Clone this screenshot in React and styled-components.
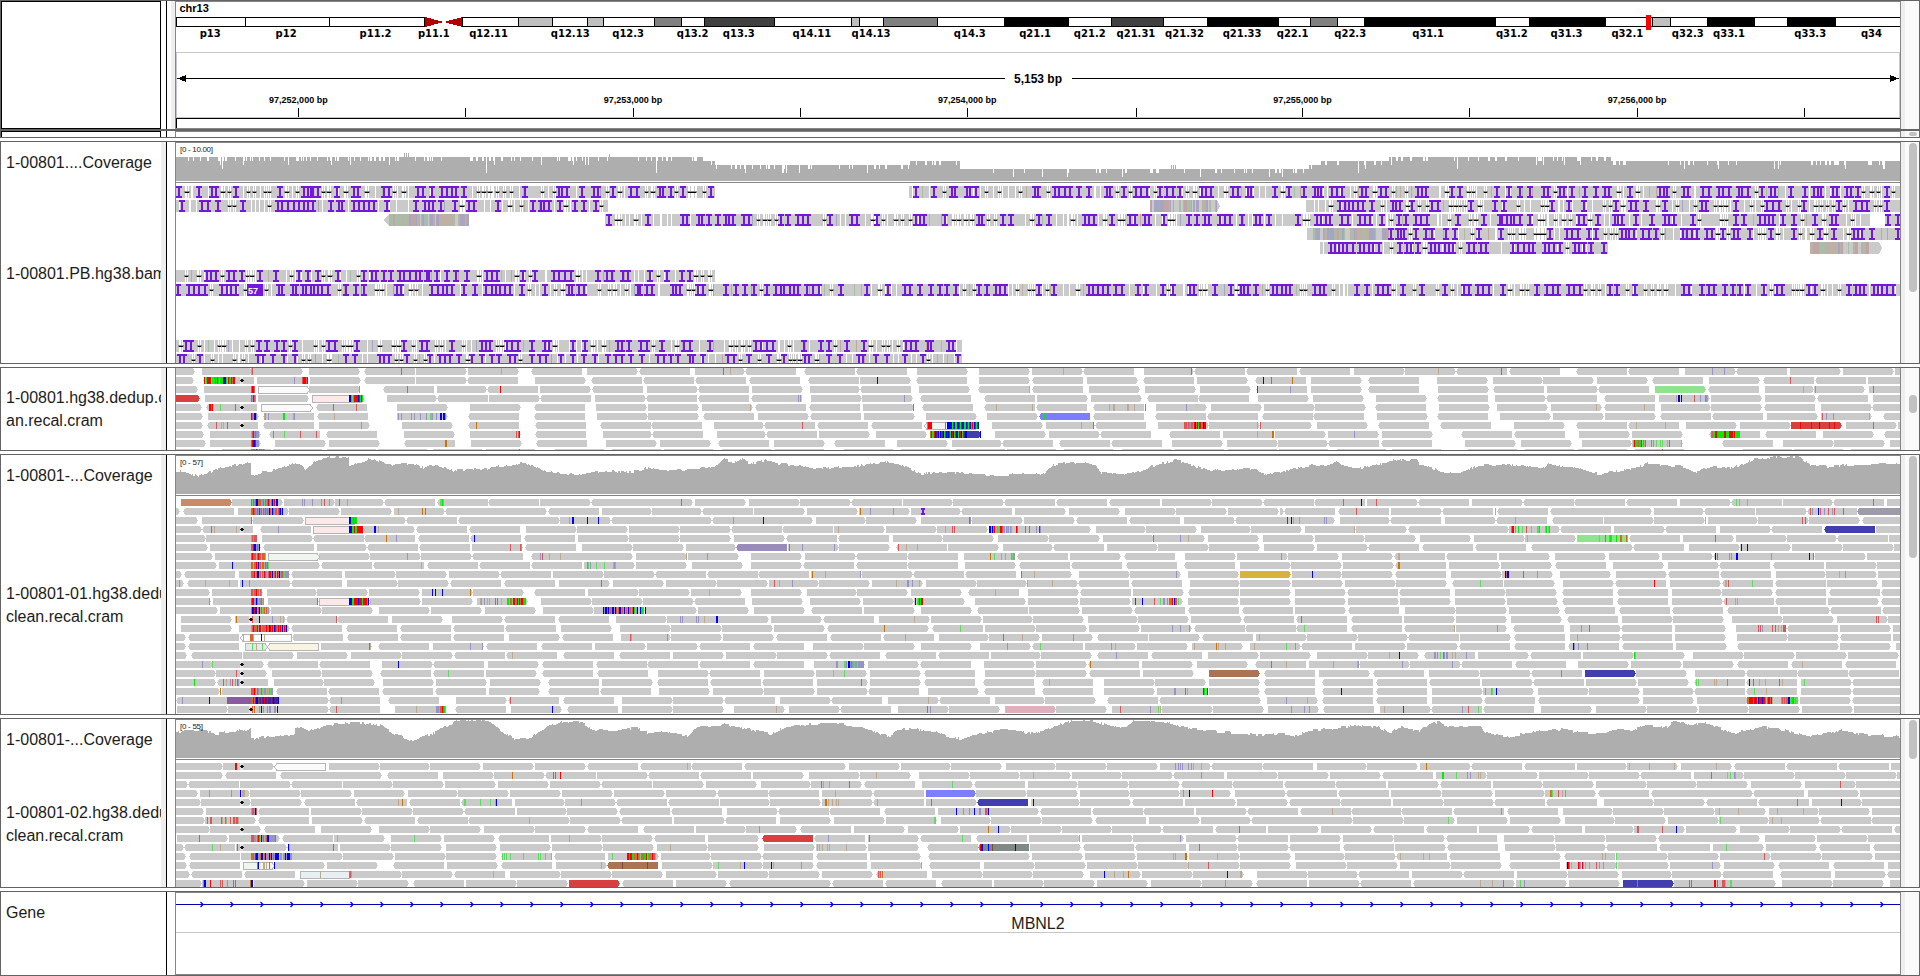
import React from "react";
import styled, { createGlobalStyle } from "styled-components";

const GlobalStyle = createGlobalStyle`
  *, *::before, *::after { box-sizing: border-box; }
  body { margin: 0; background: #fff; font-family: "Liberation Sans", Arial, sans-serif; overflow: hidden; }
`;

/* ---------- frame ---------- */

const Page = styled.main`
  width: 1920px;
  height: 976px;
  display: flex;
  flex-direction: column;
  background: #fff;
`;

const Panel = styled.section`
  display: grid;
  grid-template-columns: 160px 5px 1px 8px 1726px 18px;
  height: ${(p) => p.$height}px;
  margin-bottom: ${(p) => p.$gap || 0}px;
  border: 1px solid #646464;
  flex: none;
  min-height: 0;
`;

const Names = styled.div`
  display: flex;
  flex-direction: column;
  min-width: 0;
  min-height: 0;
  overflow: hidden;
  background: #fff;
  border: ${(p) => (p.$boxed ? "1px solid #000" : "0")};
  ${(p) => p.$open && "border-bottom: 0;"}
`;

const TrackName = styled.div`
  flex: ${(p) => (p.$height ? `0 0 ${p.$height}px` : "1 1 0")};
  display: flex;
  align-items: center;
  padding-left: 5px;
  font-size: 16px;
  line-height: 23px;
  color: #1c1c1c;
  white-space: pre;
`;

const Gutter = styled.div`
  background: ${(p) => (p.$shade ? "#eeeeee" : "#fff")};
`;

const Edge = styled.div`
  background: ${(p) => (p.$header ? "linear-gradient(90deg, #fff 4px, #eee 4px)" : "#fff")};
`;

const Divider = styled.div`
  background: #000;
`;

const DataArea = styled.div`
  border: 1px solid #858585;
  border-top-width: ${(p) => (p.$flush ? 0 : 1)}px;
  border-bottom-width: ${(p) => (p.$closed ? 1 : 0)}px;
  overflow: hidden;
  min-height: 0;
`;

const Chart = styled.svg`
  display: block;
  shape-rendering: crispEdges;
`;

const ScrollTrack = styled.div`
  min-height: 0;
  overflow: hidden;
  background: #fafafa;
  border-left: 4px solid #eee;
  padding: ${(p) => p.$top}px 2px 0 3px;
`;

const Thumb = styled.div`
  width: 8px;
  margin-left: 1px;
  height: ${(p) => p.$height}px;
  border-radius: 4px;
  background: #c1c1c1;
`;

/* ---------- scale: 2.45 units per pixel, three 1568-unit tiles ---------- */

const LEFT = 176;
const WIDTH = 1724;
const px = (tile, u) => tile * 640 + u / 2.45;
const rpx = (tile, u) => Math.round(px(tile, u));

const seeded = (seed) => {
  let s = seed;
  return () => {
    s = (s * 1664525 + 1013904223) % 4294967296;
    return s / 4294967296;
  };
};

const BASE = {
  r: "#ff0000", R: "#dd5555", b: "#0000f5", p: "#9494c8", g: "#00ee00",
  G: "#5edc5e", o: "#d17105", t: "#bfa890", L: "#50208f", H: "#7c4a3a",
};

const FILL = {
  A: "#ca8a68", B: "#7d7dff", C: "#413eb0", D: "#d84040", E: "#8fe38f", F: "#9b8bbb",
  G: "#d6b23f", H: "#ab7253", I: "#e1aebc", J: "#9f9aaa", K: "#808a84", L: "#885c9e",
};

const OUTLINED = {
  W: "#fafafa", P: "#fce8e8", Y: "#f9f3e2", N: "#f0f5f0", O: "#e8eff2", Q: "#e8e8e8",
};

/* Reads: "-" marks a reverse strand read, a letter its colour.
   Bases: position, then one letter for each pixel. */

const CRAM_A = [
  { reads: ["354 495 618 757 -892 1020 1146 -1301 1438 -1565", "135 -258 -402 -530 679 831 960 -1085 1235 -1358 -1485", "-46 181 306 -432 -562 -724 -853 992 -1118 1250 1379 1506"],
    marks: ["616:GR 983:o 1228:t", "204:R 221:t 1037:t 1350:o", "386:t 542:R 1059:p 1088:p"] },
  { reads: ["350 -498 630 759 -892 1018 -1144 1311 -1448", "-7 -135 -267 -412 538 -676 831 -960 1095 -1232 1365 -1507", "76 -215 385 522 645 777 -911 1051 -1184 -1310 1441"],
    marks: ["500:rGgrrrrGgpgRgrgGgRgbbbgGrRgrRrr 590:k 721:p 741:RrrrRr", "581:b 1527:b 1546:R", "30:o 1250:R"] },
  { reads: ["359 500 632W 758 -938 1071 -1193 1323 -1451", "17 -141 274 416 -538 684 -828 -960 1100 1237 1372 -1510", "76 -215 387 -522 654 -780 919E -1048 1188 1309 1443"],
    marks: ["616:RrrR 880:p 997:o 1225:r", "953:t 1512:r", "24:p 1282:t 1311:p 1453:o"] },
  { reads: ["365D 502 632 765P 948 -1071 1198 -1323 1458", "-15 -141 -271 419 543 -686 -842 973 1105 -1242 -1368 1514", "80 235 -384 527 -652 -793 929 1056 1188 -1315 1453"],
    marks: ["616:RprRp 855:bbgGgrrrrbrgbg", "387:p.p 647:p", "970:t.bb.b 1015:R 1030:p 1042:gpG"] },
  { reads: ["370 -505 640W -775 973 1151 -1309 1461", "20 152 -282 -414 546 -690 -842 -970 -1110 1265 1398 1528", "86 -233 390 532 664 -793 933 1055 -1187 1325 -1450"],
    marks: ["512:rrRr 539:G 576:R 590:k 816:R 873:R", "269:t 669:R 873:t 961:t 1149:t 1160:tt 1194:tt 1211:t 1237:o 1338:p", "773:t 892:t"] },
  { reads: ["372 510 -645 -777 973 -1147 -1309 1463", "20 -155 289 -417 549 701 850 -977B -1110 -1262 -1390 -1523", "-81 238 -385 539 669 796 -930 -1058 1193 1325 -1477"],
    marks: ["616:rRpbbp 648:tp..p 693:gg 718:Gp 819:t 975:p..p 1007:p 1015:p 1030:p 1043:p 1053:GGp 1068:p 1079:bb.bbp", "990:g", "1327:R 1338:p 1355:p 1442:t"] },
  { reads: ["372 -507 -645 782 985 -1147 -1311 -1470", "-27 181 -305 -433 -565 -697N 862 995 -1115 1269 1395 1522", "91 -240 -393 573 -724 -852 995 1127 1252D 1387 1514"],
    marks: ["530:R 541:t.t 557:R 590:k 885:p 1167:o", "397:R 1081:t 1110:R 703:grrrr 747:R.bbbbbgrbggbbrgrbbggbrgrbgrgbrgrb 1333:RRRpRgpRRprbRrgrrgRbrr 1512:G 1519:R", "873:t 944:t 1274:r 1301:r 1321:L 1344:r 1357:r 1453:o"] },
  { reads: ["374 514 -659 -798 990 1151 -1311 1478", "-30 189 -309 439 578 710C 870 1002 -1127 -1297 1428 1556", "118 250 -444 -573 733 862 -1051 -1189 1330 -1480"],
    marks: ["616:GRrpRppp 669:g 696:G 735:R 775:R 1264:R.Rr", "710:orggrbLrbgbrLbgrbLbrgbrbgrbbgLrbgrLbb 833:b 1512:t 1549:oR", "181:p 1055:gRggrrRggggggrrgggrrrrgrggggg"] },
  { reads: ["380 514 673 806 -989 1154 -1314 1485", "49 -190 328 -475 630 764 -888 -1026 -1155 1303 1438 1563", "-117 -248 453 590 740 863 -1082 1232 1357 1494"],
    marks: ["616:Rrbbrppp 1090:oo", "", "865:GrgggRggrGgtR 909:g.p..G 930:G.G 947:G 953:R 983:t"] },
  { reads: ["370 545 670 800 925 1060 1190 1360 1500", "60 200 330 500 640 775 900 1040 1180 1310 1440 1565", "140 275 460 600 730 870 1135 1260 1400"],
    marks: ["616:RgoRGrRGogRGoG 1272:R", "", "936:o"] },
];

const CRAM_01 = [
  { reads: ["443A 569 695 820 -942 -1070 -1196 1323 -1448", "5 135 267 393 -516 644 768 -892 -1020 -1148 1279 1401 -1526", "-84 212 -338 470 -595 -721 -848 980 -1104 1232 -1356 1487"],
    marks: ["616:RGRpRbboRRppoGRpRrRtRbRrpbb 741:p.p 765:p 787:p..R 806:p 831:R 849:G 1078:GGgG", "101:o", "155:o 199:b 236:R 1116:G..G 1145:G 1453:o"] },
  { reads: ["315 -448 583 709 835 966 -1091 1216 -1342 1475", "30 -153 279 409 537 664 -787 919 1051 1188 1313 1441 1567", "-10 -143 272 -398 -532 -661 787 916 -1040 1165 -1290 -1413J"],
    marks: ["616:oorRgpRprpRtRpRpRpbRpbRpRRpRrbpb 974:t 1034:o..R", "539:o 564:p 620:p", "187:R 527:t 1299:R.p 1319:b.R 1333:p 1343:R 1353:p.R 1380:R"] },
  { reads: ["360 495 620 747P 873 -994 -1121 1246 1371 -1496", "52 -177 300 431 553 688 813 941 -1068 -1197 1333 -1458", "10 147 -270 405 -530 -666 793 917 1048 1172 1297 -1425"],
    marks: ["616:R 855:bbggRgRg 1394:G..bb 1437:b 1464:b", "228:p 302:b 807:Rp", "17:r 26:b.G 47:G 109:p.p 576:G 1042:t 1280:R..R"] },
  { reads: ["370 -496 -636 767P 893 -1020 -1148 1289 1414 1540", "98 -222 -347 475 603 727 854 981 1117 1240 1374 1497", "61 187 -313 438 562 -687 818 -943 1078 -1203 -1332C 1459"],
    marks: ["517:R..t 577:t 590:k 680:p 855:bbbggrggrrrrrr 917:bb 926:t", "485:t 748:t 764:R.R 856:bbGbRrGtpGprrRpp.pGp.pG 921:rR 944:R 953:R 969:p 978:rp", "182:t 566:grr.p 582:g 594:G 603:R 616:G 630:GGg 649:Gg.Gg"] },
  { reads: ["380 505 642 -766 -893 -1024 -1151 -1285 1416 1541", "98 230 -357 -486 620 743 877 1002 1134 1260 1392 1526", "85 208 343 475 600 728E -854 987 1117 1241 -1364 1492"],
    marks: ["616:GRpRRR 946:o 970:p 1161:b", "1257:o 1323:p 1343:t", "605:t 782:G 797:o 807:pgp 822:g 832:oo 848:oG 1066:R"] },
  { reads: ["385 514 -645 777 -900 -1027 1156 -1287 1427 1552", "112 -235F 362 487 -628 755 889 -1013 1144 1268 1394 1529", "91 -215 -349 -478 -614 741 -865 1002 1127 1254 1379 1504"],
    marks: ["616:RRrbbpRpb 1249:R 1273:Rp", "365:o 397:p 476:p 632:R 652:t 679:t", "1130:b 1144:b"] },
  { reads: ["396 527 657N 782 907 1031 -1156 -1301 1427 1558", "118 272 404 -529 -654 794 -923 1053 -1185 1335 1463", "19 153 -280 -407 537 674 806 936 -1061 1187 1310 1438"],
    marks: ["616:RrRRRtRrRRtRRot 998:p 1323:p.R 1346:t 1371:t", "113:t 165:p 858:o 867:G 885:G 895:G 910:pGpp", "2:p 289:tt 1066:b.R 1099:p.p 1117:bb 1204:p 1297:b 1307:o"] },
  { reads: ["406 537 660 -786 -914 -1045 -1173 -1302 1430 1558", "127 272 -399 -528 -654 796 -929 -1055 -1190 -1332 1470", "26 154 -281 415 541 -673 816 951 -1076 -1208 1338 1462"],
    marks: ["569:b 616:RotRRrRbpRtoRtRpRG 1031:t 1437:gG 1446:p 1461:G 1480:G 1503:GpG", "", "289:oo"] },
  { reads: ["320 -450 586 -713 845 970 1100 -1225 1356 1480", "-37 -164 -290 420 543 -669 -796 933 1076 1201 1343 1470G", "29 153 -281 419 543 686 822 -950 -1078 1216 1338 1466"],
    marks: ["616:RRRrGRbbpRtRprRpGRrrRbpRrtrRbpoRpGpppp", "421:o 453:t 539:p 934:R 966:t 1312:p", "79:b 551:bRbb 596:R 630:p 1370:t 1384:p"] },
  { reads: ["326 -458 587 -714 850 974 -1102 -1234 1370 1502", "64 189 316 439 568 701 825 949 -1073 -1202 1347 1470", "29 159 283 -421 548 693 -820 955 -1082 -1212 1340 1475"],
    marks: ["439:p 503:t 562:t 593:b 610:p 1473:o", "328:R 341:t 373:p 628:t 653:pp 667:p 684:t 948:G 1010:t", "490:G 916:r 1090:tt.R 1156:G"] },
  { reads: ["390 520 653 777 904 1035 1159 -1309 1441 1566", "124 272 408 531 665 -804 950 -1079 1208 -1342 1471", "37 -164 -291 428 553 -691 -826 960 1084 -1212 -1344 -1472"],
    marks: ["616:RRpRRrpRtRp 1058:b..b 1083:b 1152:o", "169:t 870:t", ""] },
  { reads: ["392 522 657 782P 907 1035 1168 1325 1450", "7 -133 274 416 546 671 821 951 1079 1205 1342 1471", "37 167 295 428 556 -691 -825 960 -1086 -1212 1342 -1473"],
    marks: ["513:p 616:RrrppbRtppRtp 777:R 855:bbbggrrrrbrrrgrrrrRb 1175:tp 1185:p 1193:t.t 1213:o.o 1228:t 1241:ggGRoGrrgRrgrRrrRgg", "674:b.Ggrgrr 1213:r 1230:b 1259:R 1273:G 1282:pp 1291:p.RoRr.bRR.G", "1093:R 1115:G.G"] },
  { reads: ["410 540 665 790 929 1055 1188 1330 1456", "15 142 279 -418 549 688 -825 953 1084 -1210 -1342 -1474", "37 -166 307 432 561 -695 -831 -960 -1094 1224 -1348 -1475"],
    marks: ["616:gbbrbbpRbtRGpotRGp 1478:bpbbRbgRgbbpbRpRbbgRpbGRpbgRpRbgGpb", "0:bggp.b", ""] },
  { reads: ["443 575 -700 -825 960 1107 -1236 -1367 1510", "65 190 321 -449 586 713 840 963 1098 1221 1350 -1477", "-39 -175 305 432 566 -702 838 962 1107 1233 1365 1490"],
    marks: ["577:o 612:k 617:R 635:b 667:p 685:t..t 822:R", "98:p.p 136:p.p 157:t 186:bb 672:t", "52:R 1459:R.R"] },
  { reads: ["443 586 -712 -848 -980 -1110 -1237 1374 1519", "76 200 328 -458 584 -715 845 971 1100 1227 -1357 -1483", "-40 -175 -305 432 -572 710 -836 968 1117 -1243 1371 1503"],
    marks: ["616:GRrRRorprrtRRRorRRbrRrRbrRRrorRbprRb", "598:o 785:G 1304:p 1323:p 1345:p", "60:G 427:t 532:p 738:p 757:o 1172:R.R 1181:p 1206:R..R 1220:t 1227:t.R 1236:RR"] },
  { reads: ["330 -460 -589W -715 -849 -979 -1110 1247 -1376 1521", "77 203 -332 -465 -595 733 856 985 -1119 1247 -1378 1510", "65 191 -314 440 -573 710 -836 968 1119 1244 -1371 1503"],
    marks: ["596:t 612:oRRt 640:b 648:t 1543:RG", "66:p 649:G 889:R 936:t 1061:p 1517:t", "728:G"] },
  { reads: ["330 -460 601Q -655Y 786 -925 1060 -1191 -1325 1457", "17 -144 -278 425 548 688 833 -960 1090 1217 1353 1495", "-51 184 311 -439 -573 -706 -838 970 -1119 1245 1371 1510"],
    marks: ["618:G 628:t 643:G 903:Rt 1152:p 1181:p", "900:p 980:G 1154:p 1164:t 1357:t 1410:o 1416:t 1433:t 1505:t", "15:G 37:p 717:bp 731:p 753:g"] },
  { reads: ["334 -467 595 728 860 986 -1113 -1240 -1379 -1516", "81 211 336 -464 -601 -730 860 983 -1119 -1253 1392 1520", "90 216 -352 486 -612 742 868 1012 1138 1264 1392"],
    marks: ["1255:t", "1165:p", "268:t 292:b 378:pp.p 392:G 400:Rp.pp 421:t 429:t 456:p 868:gG"] },
  { reads: ["396 523 -653 -781 936 -1060 1196 -1328 -1459", "-18 -144 -278 426 559 -685 843 971 -1098 1230 1365 -1507", "71 195 319 -444 -575 730 860 987 -1120 -1251 -1385"],
    marks: ["495:p 519:G 590:k 976:b", "480:pp 501:GGp.bbpRppGppGpppppp 1102:o 1546:o", "15:t 131:G 188:tp 299:p 422:p 1279:t"] },
  { reads: ["405 528 666 789 -930 -1060 1190 -1329 -1463", "44 -169 304 430 563 -697 845 971 -1100 1232 1394H -1528", "96 -227 365 490 -615 747C 872 1017 -1141 -1266 -1392"],
    marks: ["579:R 590:k 1098:G", "474:t 500:G", "689:g"] },
  { reads: ["404 -531 671 795 938 1067 1201 -1342 1475", "-41 -171 -299 434 563 -697 -840 -984 1137 1262 1394 -1530", "-102 -234 -365 495 -620 750 876 -1014 -1142 1276 -1401"],
    marks: ["476:g 546:R 554:t 563:p.R 575:p.Rp 590:k", "542:o 1003:t", "1020:G.G 1064:t.t 1096:g 1149:b 1159:R 1174:t 1189:t 1223:R..t 1284:G"] },
  { reads: ["413 544 -676 -804 -935 -1065 1199 -1342 -1471", "47 179 303 434 -558 706 -842 -984 1137 1267 1394 -1530", "-103 -234 372 498 632 757 889 -1015 -1142 1276 -1401"],
    marks: ["540:o 616:RRRrotRpttRGtpptGtpGpp", "1308:pp 1335:R.G 1380:rgGGr", "150:b 502:p 517:pG 529:b 1161:G 1191:t"] },
  { reads: ["-430 556L 681 -806 -950 1117 -1244 -1380 1525", "80 -207 343 -468 608 -732 870 992 -1143 -1271 1397 1536", "-103 -234 372 -499 -631 758 889 1022 1147 1274 -1401"],
    marks: ["446:p 513:b 616:RorRrbbHrLHLLrLLrLLLrLbLLLLb 836:p 1250:R", "706:t", "15:p 67:t 1144:oorrrrRrbrRbrrrbrrotRrrRrt 1227:pRpRpRRbbGpgRGpGG"] },
  { reads: ["434 558 681 -806 968 -1114 1252 -1390 1525", "80 230 365 -490 632 757 894I 1019 1156 1280 1405 1539", "-105 245 -370 -498 639 774 899 1027 1150 1279 1406"],
    marks: ["612:k 617:R 623:o 635:p.b.p 655:p.pp 672:pp.b 822:R 1020:t 1068:pppGRorRgG 1353:b", "334:t 704:R..p 1176:R 1250:p 1270:G.t", "27:p 60:p 71:p 256:t 301:r 447:p 461:R 486:G"] },
];

const CRAM_02 = [
  { reads: ["421 546 -671W 806 930 1054 1183 1311 -1437 -1567", "-126 -254 380 512 639 763 897 1020 1144 1274 -1398 -1523", "91 213 343 -468 -597 728 851 982 -1112 -1240 -1367 1497"],
    marks: ["576:rr 590:k", "114:t 1311:p..p 1323:p.p 1343:p 1350:p.t 1375:t", "358:o 856:t 905:G 966:t 1067:t"] },
  { reads: ["422 -551 -685 812 -947 1085 1210 -1336 1462", "-19 -146 277 414 538 684 808 932 1058 1181 -1305 1438 1563", "122 -251 381 507 635 758 -883 1014 1137 1262 1386 1511"],
    marks: ["1255:o 1355:R.R 1372:r", "578:t 963:t 1375:p", "397:gg 432:G 458:p..p 486:t.t 1056:R 1096:t..G 1113:pG"] },
  { reads: ["340 -461 587 -712 840 964 1090 1220 1347 -1472", "32 162 296 420 -548 691 -818 951 1074 1198 -1325 -1450", "-10 -134 265 -391 522 644 774 899 1022 1154 1286 1410"],
    marks: ["", "444:R.G 463:G 512:R 765:G", "1372:R"] },
  { reads: ["360 490 613 738 867 1000 1122 1250 1377 1504", "64 -188 -313 446 -571 701B 823 949 1078 1200 1324 1458", "-15 -141 272 398 527 650 -780 -908 1034 -1160 1294 1421"],
    marks: ["513:p 567:p 588:b.ttt", "478:t 1330:p 1345:b 1401:r", "661:ogG 682:R 690:t 699:p"] },
  { reads: ["367 492 616 -744 -872 -1003 -1130 1262 1384 -1508", "-68 195 318 446 -572 700 -825C 957 1079 -1205 1335 1463", "-21 -147 277 401 -525 -651 794 917 -1043 -1170 1303 1426"],
    marks: ["590:k 976:t 985:o 1138:GG 1176:G 1201:G 1212:Gb 1424:p", "453:oo.t 471:t 480:t.t 581:G 713:R 963:b", "1267:o 1375:b"] },
  { reads: ["375 505 -632 762 887 1011 -1136 1267 1390 -1516", "-75 213 -339 -464 -597 730 853 -980 -1108 -1233 1362 -1488", "-48 -173 -297 -425 -555 693 817 942 1066 1197 1320 1450"],
    marks: ["616:GRRpbR", "774:b 791:p 806:p 818:b 831:pp 845:RRpb", "128:t 542:p 1076:t 1122:t 1218:t 1282:t"] },
  { reads: ["380 502 -632 764 -893 -1021 -1147 1272 1397 -1522", "83 -208 343 475 603 737 861 986 -1114 1247 1374 -1498", "55 180 305 434 563 698 820 951 1075 1197 -1322 -1447"],
    marks: ["507:o..RR 541:Rt 551:ot 563:R..RRtRRt 1297:t", "720:GG", "412:G 1078:G 1205:t 1228:t"] },
  { reads: ["390 514 -648 786 929 1053 1186 1311 -1437", "-7 137 260 -391 524 657 783 908 1033 1157 -1280 -1408 1539", "100 -227 -357 488 -614 747 868 995 1127 1250 -1374 -1504"],
    marks: ["590:k", "292:p 853:o 877:b 1468:R", "875:RR 936:R 970:b"] },
  { reads: ["434 560 -690 818 958 1088 -1220 1350 1474", "-34 167 -298D -426 558 -686 -822 953 1083 1208 1338 -1463", "24 154 279 -407 549 674 799 -926 1052 1188 1316 1440"],
    marks: ["488:R 616:oRRpptorRGbpotpRbbppppppR 826:t 1015:G 1394:G", "461:p 561:R 790:G 1076:G 1323:p", ""] },
  { reads: ["326 -450 577 -702 833 958 1093 1225 1352 1477", "42 167 304 430 559 -702 -828K 956 -1085 -1213 1344 1466", "-23 -154 281 -409 551 675 -799 -929 1061 1191 -1320 -1452"],
    marks: ["519:G 539:t 581:R 590:k 706:bG 816:R", "74:t 434:t.t..t 457:t.t 505:t 833:rbb 853:b 863:H 919:b 1370:o", "1093:G"] },
  { reads: ["330 -462 590 715 840 968 1092 -1227 -1357 1490", "51 174 -299 -430 563 -706 831 960 1090 1217 1345 1471", "37 160 -285 -413 563 -697 825 950 1078 1203 1328 1458"],
    marks: ["616:ooRprbbppobbpRbpppbRbpRpbbbb.pp.ppbpbbbpp 1230:G.G.G 1250:G 1282:G 1317:G.G 1336:G 1350:G 1499:G 1536:rrRrrggRgorRgr", "0:GoRRggrGggRgroRG 1306:t.G 1335:oo 1414:t", "294:t 351:t 365:t 789:t..t 822:G 1186:R"] },
  { reads: ["332 -462 596N 671 800 -962 1095 -1227 1362 -1487H", "54 178 302 -430 566 -708 843 967 1095 1221 1345 1469", "39 163 294 418 -560 700 827 955 1088 -1220 -1355 1490"],
    marks: ["630:Rb 645:tt 652:t 660:R 671:b 1473:G 1524:H 1546:o", "18:H 190:G 244:t 255:b 321:b.G 394:p 688:G 1343:t 1392:R", "703:brR.t 730:rRp.rG.G 757:G 774:R..p 791:p 822:G 1059:p"] },
  { reads: ["340 -467 -599 735O 860 985 -1112 1249 1374 1499", "64 191 317 446 -577 715 841 964 1102 1229 1356 1512", "68 -190 323 -449 581 705 838 960 -1084 -1224 1360 -1487"],
    marks: ["784:t 855:gRG 1208:t", "584:RGR 593:o 1137:b 1162:t 1184:t 1196:o 1437:b 1470:tt", ""] },
  { reads: ["370 495 622 752 877 -1012 1142 1266 1394D -1523", "87 -218 344 -470 -600 -737 867 990 1120 1252 1376 -1508", "71 -196 -326 451 579 709 840C 965 1090 1230 1356 1494"],
    marks: ["497:gbb 514:r 538:R.R 557:p 571:R.R 612:obb", "1434:p", "489:t 520:t 547:o 587:G 598:p 875:o 1002:R.R 1063:rr.R 1083:RoRt 1103:GG"] },
];

/* Long reads: spans, insertions; "dull" spans are the low-quality reads. */
const LONG_READS = [
  { row: 0, spans: [[0, 431, 1, 183], [1, 660, 2, 1520]],
    ins: ["438 487 520 530 578 686 745 755 762 768 780 826 868 876 942 953 1025 1037 1058 1083 1095 1108 1117 1136 1287 1370 1378 1390 1425 1455 1465 1503 1545 1560", "50 56 75 105 175 677 720 765 772 800 808 822 967 974 1017 1026 1042 1053 1075 1100 1145 1152 1187 1215 1228 1243 1275 1290 1305 1322 1377 1387 1399 1453 1466 1490 1498 1555", "22 58 85 92 100 128 140 152 200 210 247 259 337 347 357 421 440 531 560 587 613 648 657 685 697 715 748 775 797 807 857 932 940 948 990 1000 1037 1050 1075 1086 1100 1125 1133 1146 1182 1203 1212 1252 1287 1308 1317 1326 1356 1365 1390 1400 1415 1487"] },
  { row: 1, spans: [[0, 431, 0, 1490], [2, 64, 2, 1520]], dull: [[1, 1249, 1, 1420, 1]],
    ins: ["446 495 510 534 595 680 690 705 720 733 745 755 768 812 830 838 868 880 892 905 917 948 1020 1042 1050 1060 1080 1115 1150 1162 1221 1305 1325 1333 1345 1373 1408 1431 1460", "", "147 160 170 180 190 203 225 276 284 295 323 373 386 467 526 550 666 708 745 822 861 872 897 943 1035 1043 1118 1193 1207 1222 1285 1370 1412 1425 1437 1487"] },
  { row: 2, spans: [[0, 1482, 2, 1445], [2, 1482, 2, 1520]], dull: [[0, 943, 0, 1148, -1]],
    ins: ["1492", "20 105 115 145 153 170 190 210 218 228 255 267 345 362 387 400 412 466 520 531 580 677 687 697 747 830 838 890 910 977 1002 1090 1100 1113 1156 1200 1213 1237 1247 1285 1345 1364 1385 1395 1422 1434 1446 1475 1508 1518 1541", "43 90 100 112 122 152 167 197 208 220 249 291 308 333 345 360 435 500 538 545 555 565 573 587 613 733 745 780 820 828 838 872 911 943 952 965 1012 1118 1137 1177 1188 1198 1208 1233 1260 1310 1353 1361 1490 1515"] },
  { row: 3, spans: [[2, 267, 2, 1520]], dull: [[2, 66, 2, 268, 0]],
    ins: ["", "", "272 288 296 304 332 357 373 406 428 487 541 661 703 715 730 758 775 838 847 856 868 890 905 920 988 997 1010 1022 1045 1058 1085 1112 1122 1152 1203 1260 1322 1358 1406 1417 1427 1450 1513"] },
  { row: 4, spans: [[2, 98, 2, 803]], dull: [[2, 1298, 2, 1474, 1]],
    ins: ["", "", "125 135 145 155 165 178 197 207 218 228 243 295 310 320 338 370 380 390 405 415 425 462 475 492 505 570 582 597 610 620 650 660 672 685 722 732 745 762 795"] },
  { row: 6, spans: [[0, 431, 1, 183]],
    ins: ["508 518 530 560 573 594 637 677 733 755 778 828 893 912 922 940 957 980 990 1005 1020 1030 1045 1052 1070 1095 1118 1143 1192 1205 1217 1282 1310 1357 1370 1385 1400 1465 1487 1500 1527 1538", "25 66 104 122", ""] },
  { row: 7, spans: [[0, 431, 2, 1520]],
    ins: ["435 463 475 487 503 543 555 565 577 683 692 718 725 742 750 762 770 778 788 803 847 872 893 973 983 1058 1073 1085 1095 1108 1138 1163 1190 1205 1215 1225 1238 1250 1278 1335 1393 1402 1418 1432 1562", "0 18 30 80 88 98 143 155 210 235 257 280 312 333 345 352 368 377 387 408 425 438 493 557 607 650 662 685 712 735 753 775 830 850 872 882 895 977 1015 1100 1110 1122 1135 1147 1167 1180 1220 1240 1281 1306 1347 1357 1408 1447 1472 1480 1490 1510 1550 1560", "5 15 25 85 97 108 188 213 240 252 265 302 347 404 452 462 485 498 512 546 630 655 668 682 707 720 735 808 826 869 990 1003 1035 1050 1063 1090 1110 1128 1146 1187 1218 1230 1297 1310 1395 1410 1420 1432 1455 1465 1475 1487 1502"] },
  { row: 11, spans: [[0, 431, 1, 790]],
    ins: ["456 468 634 653 678 697 723 807 820 875 990 1033 1047 1107 1180 1190 1200 1243 1255 1270 1303 1335 1345 1405 1433 1515 1525 1540", "3 18 53 107 122 172 285 297 310 325 403 443 462 507 548 652 665 677 705 713 758 767", ""] },
  { row: 12, spans: [[0, 431, 1, 790]],
    ins: ["440 452 490 633 645 668 697 722 847 870 930 942 953 997 1053 1078 1090 1103 1125 1157 1180 1205 1222 1250 1262 1303 1322 1338 1375 1403 1430 1457 1490 1510 1525 1545", "5 43 60 75 93 123 130 155 215 230 267 317 353 405 415 462 490 537 547 578 605 650 693 778", ""] },
];

/* Coverage profiles: position:offset pairs for each tile. */
const COVERAGE_01 = [
  "431:62 450:62 485:80 510:68 540:55 570:47 600:40 614:38 615:77 640:67 660:63 690:52 715:40 735:47 748:60 765:40 780:30 800:22 854:20 855:48 875:40 900:28 915:27 935:38 960:48 990:40 1010:42 1040:55 1060:45 1090:55 1110:62 1150:57 1180:60 1210:50 1245:45 1275:40 1310:48 1340:65 1390:74 1440:70 1490:62 1530:68 1567:62",
  "0:60 20:52 50:60 100:60 150:55 190:45 205:28 235:38 250:28 270:42 310:30 340:42 380:45 430:57 480:52 520:50 560:42 600:35 640:45 690:72 730:65 780:68 820:75 880:77 940:70 985:74 1010:45 1050:38 1115:42 1130:70 1180:72 1230:65 1250:50 1310:30 1345:42 1390:62 1440:60 1510:55 1525:72 1567:65",
  "0:68 50:52 80:45 110:50 138:30 150:45 190:57 230:45 260:38 275:30 335:28 340:48 365:50 395:67 440:68 490:44 560:45 600:48 640:58 657:38 690:48 740:55 780:72 840:60 880:50 900:40 940:45 990:50 1018:65 1060:50 1110:53 1160:28 1210:22 1270:22 1300:45 1340:50 1420:42 1500:42 1522:38",
];
const COVERAGE_02 = [
  "431:66 490:60 530:72 570:62 595:60 614:58 615:88 650:80 720:78 722:58 740:50 760:62 800:45 870:38 935:45 960:68 1010:93 1060:70 1110:38 1125:30 1190:32 1225:60 1260:87 1300:82 1340:48 1380:34 1425:36 1450:60 1500:62 1567:52",
  "0:60 20:70 60:63 115:77 140:50 205:43 255:55 320:72 360:48 465:38 540:50 590:75 615:78 625:62 660:55 730:68 760:85 800:86 830:70 890:60 960:70 1000:58 1045:35 1110:32 1130:40 1185:55 1210:32 1300:38 1330:52 1380:62 1450:68 1510:75 1567:70",
  "0:70 35:80 70:60 110:58 180:48 240:52 270:70 290:50 340:62 375:40 390:35 410:52 490:48 500:65 560:80 620:65 690:58 740:70 795:70 825:55 860:62 890:48 950:50 965:32 1000:45 1045:40 1110:70 1180:50 1240:62 1300:80 1380:60 1420:72 1522:80",
];

const box = (x, y, w, h) => `M${x} ${y}h${w}v${h}h${-w}z`;

const parseReads = (tiles) => {
  const list = [];
  tiles.forEach((line, tile) =>
    line.split(" ").filter(Boolean).forEach((token) => {
      const [, dir, at, kind] = token.match(/(-?)(\d+)([A-Z]?)/);
      list.push({ x: rpx(tile, +at), reverse: dir === "-", kind });
    })
  );
  return list.map((r, i) => ({ ...r, w: Math.min(51, (list[i + 1] ? list[i + 1].x : 9999) - r.x) }));
};

const readShape = ({ x, w, reverse }, y) =>
  reverse
    ? `M${x} ${y + 3.5}l2.5 -3.5h${w - 2.5}v7h${2.5 - w}z`
    : `M${x} ${y}h${w - 2.5}l2.5 3.5l-2.5 3.5h${2.5 - w}z`;

function ShortReads({ rows, top }) {
  const solid = {};
  const outlined = [];
  const bases = {};
  const dots = [];
  rows.forEach((row, i) => {
    const y = top + i * 9;
    parseReads(row.reads).forEach((read) => {
      if (OUTLINED[read.kind]) outlined.push({ ...read, y });
      else {
        const fill = FILL[read.kind] || "#cacaca";
        solid[fill] = (solid[fill] || "") + readShape(read, y);
      }
    });
    row.marks.forEach((line, tile) =>
      line.split(" ").filter(Boolean).forEach((token) => {
        const [at, letters] = token.split(":");
        const x0 = rpx(tile, +at);
        [...letters].forEach((c, n) => {
          if (c === "k") dots.push([x0 + n, y]);
          else if (BASE[c]) bases[c] = (bases[c] || "") + box(x0 + n, y, 1, 7);
        });
      })
    );
  });
  return (
    <g>
      {Object.entries(solid).map(([fill, d]) => <path key={fill} d={d} fill={fill} />)}
      {outlined.map((r) => (
        <path key={`${r.x}-${r.y}`} d={readShape({ ...r, x: r.x + 0.5 }, r.y + 0.5)} fill={OUTLINED[r.kind]} stroke="#b5b5b5" />
      ))}
      {Object.entries(bases).map(([c, d]) => <path key={c} d={d} fill={BASE[c]} />)}
      {dots.map(([x, y]) => (
        <g key={`${x}-${y}`}>
          <path d={box(x - 1, y, 3, 7)} fill="#e2e2e2" />
          <path d={box(x - 1, y + 3, 4, 1) + box(x, y + 2, 2, 3)} fill="#111" />
        </g>
      ))}
    </g>
  );
}

function Coverage({ profile, base, origin, seed }) {
  const rand = seeded(seed);
  const points = profile.flatMap((line, tile) =>
    line.split(" ").map((p) => {
      const [u, v] = p.split(":").map(Number);
      return [px(tile, u), origin + v / 3];
    })
  );
  let d = `M${LEFT} ${base}`;
  let k = 0;
  let jitter = 0;
  for (let x = LEFT; x < LEFT + WIDTH; x += 1) {
    while (k < points.length - 2 && points[k + 1][0] <= x) k += 1;
    const [x1, y1] = points[k];
    const [x2, y2] = points[k + 1];
    const t = Math.max(0, Math.min(1, (x - x1) / (x2 - x1)));
    if (rand() < 0.4) jitter = Math.round((rand() - 0.5) * 2.4);
    d += `V${Math.round(y1 + (y2 - y1) * t) + jitter}h1`;
  }
  return <path d={`${d}V${base}z`} fill="#aeaeae" />;
}

function DepthSteps() {
  const rand = seeded(23);
  const steps = [[0, 431, 24], [1, 155, 20], [1, 186, 16], [1, 660, 20], [1, 783, 12], [2, 71, 16], [2, 97, 20], [2, 268, 24], [2, 813, 20]];
  const deep = { [rpx(0, 545)]: 12, [rpx(0, 1191)]: 8, [rpx(1, 38)]: 8, [rpx(1, 350)]: 8, [rpx(1, 357)]: 8, [rpx(1, 915)]: 4, [rpx(1, 1045)]: 4, [rpx(2, 190)]: 8, [rpx(2, 433)]: 12, [rpx(2, 5)]: 4, [rpx(0, 595)]: 16 };
  const peaks = { [rpx(0, 991)]: 28, [rpx(0, 994)]: 28, [rpx(0, 999)]: 28, [rpx(0, 1493)]: 27, [rpx(1, 1302)]: 16, [rpx(1, 1305)]: 16, [rpx(1, 1311)]: 16 };
  let d = "";
  let notch = 0;
  for (let x = LEFT; x < LEFT + WIDTH; x += 1) {
    const step = steps.filter(([t, u]) => px(t, u) <= x + 0.5).pop() || steps[0];
    let h = step[2];
    if (notch <= 0 && rand() < (h === 12 ? 0.07 : 0.13)) notch = rand() < 0.3 ? 2 : 1;
    if (notch > 0) { h -= 4; notch -= 1; if (notch === 0 && rand() < 0.12) h -= 4; }
    if (deep[x]) h = deep[x];
    if (peaks[x]) h = peaks[x];
    d += box(x, 181 - h, 1, h);
  }
  return <path d={d} fill="#aeaeae" />;
}

const MUTED = ["#bfa5a5", "#a8bda8", "#a6a6c2", "#bdb0a4"];

function LongReads({ top }) {
  const rand = seeded(91);
  const paths = { body: "", gap: "", shade: "", dash: "", ins: "", m0: "", m1: "", m2: "", m3: "" };
  LONG_READS.forEach(({ row, spans, dull = [], ins }) => {
    const y = top + row * 14;
    const marks = ins.flatMap((line, tile) => line.split(" ").filter(Boolean).map((u) => rpx(tile, +u)));
    spans.forEach(([t1, u1, t2, u2]) => {
      const a = rpx(t1, u1);
      const b = rpx(t2, u2);
      paths.body += box(a, y, b - a, 12);
      let x = a + 3;
      while (x < b - 4) {
        const free = !marks.some((m) => Math.abs(m - x - 1) < 5);
        const roll = rand();
        if (free && roll < 0.62) {
          const w = rand() < 0.35 ? 2 : 1;
          paths.gap += box(x, y, w, 12);
          if (rand() < 0.8) {
            paths.gap += box(x + w + 1, y, 1, 12);
            paths.shade += box(x - 1, y + 5, w + 4, 2);
            paths.dash += box(x, y + 6, w + 2, 1);
          }
        } else if (roll > 0.9) {
          paths[`m${Math.floor(rand() * 4)}`] += box(x, y, 1, 12);
        } else if (roll > 0.72) paths.gap += box(x, y, 1, 12);
        x += 4 + Math.floor(rand() * 4);
      }
    });
    dull.forEach(([t1, u1, t2, u2, dir]) => {
      const a = rpx(t1, u1) + (dir < 0 ? 4 : 0);
      const b = rpx(t2, u2) - (dir > 0 ? 3 : 0);
      paths.body += box(a, y, b - a, 12);
      if (dir < 0) paths.body += `M${a} ${y}l-5 6l5 6z`;
      if (dir > 0) paths.body += `M${b} ${y}l3 6l-3 6z`;
      let color = 0;
      for (let x = a; x < b; x += 1) {
        if (rand() < 0.45) color = Math.floor(rand() * 5);
        if (color < 4) paths[`m${color}`] += box(x, y, 1, 12);
      }
    });
    marks.forEach((m) => {
      paths.ins += box(m - 1, y, 2, 12) + box(m - 3, y, 6, 2) + box(m - 3, y + 10, 6, 2);
    });
  });
  return (
    <g>
      <path d={paths.body} fill="#cacaca" />
      {MUTED.map((c, i) => <path key={c} d={paths[`m${i}`]} fill={c} />)}
      <path d={paths.gap} fill="#fff" />
      <path d={paths.shade} fill="#8f8f8f" />
      <path d={paths.dash} fill="#000" />
      <path d={paths.ins} fill="#7516dc" />
      <path d={box(247, top + 98, 16, 12)} fill="#7516dc" />
      <text x="248" y={top + 108} fontSize="9" fontWeight="bold" fill="#fff">57</text>
    </g>
  );
}

const BANDS = [
  [0, 1270, 0, 1356, "#bfbfbf"], [0, 1439, 0, 1481, "#bfbfbf"], [1, 35, 1, 102, "#808080"], [1, 158, 1, 330, "#404040"],
  [1, 518, 1, 540, "#bfbfbf"], [1, 596, 1, 729, "#808080"], [1, 892, 1, 1052, "#000"], [1, 1155, 1, 1283, "#404040"],
  [1, 1390, 1, 1566, "#000"], [2, 74, 2, 142, "#808080"], [2, 206, 2, 529, "#000"], [2, 610, 2, 799, "#000"],
  [2, 912, 2, 957, "#bfbfbf"], [2, 1046, 2, 1164, "#000"], [2, 1242, 2, 1362, "#000"],
];

const BAND_NAMES = [
  ["p13", 0, 515], ["p12", 0, 701], ["p11.2", 0, 920], ["p11.1", 0, 1063], ["q12.11", 0, 1197], ["q12.13", 0, 1397],
  ["q12.3", 0, 1539], ["q13.2", 1, 129], ["q13.3", 1, 242], ["q14.11", 1, 421], ["q14.13", 1, 566], ["q14.3", 1, 808],
  ["q21.1", 1, 968], ["q21.2", 1, 1102], ["q21.31", 1, 1215], ["q21.32", 1, 1334], ["q21.33", 1, 1475], ["q22.1", 2, 31],
  ["q22.3", 2, 172], ["q31.1", 2, 363], ["q31.2", 2, 568], ["q31.3", 2, 702], ["q32.1", 2, 851], ["q32.3", 2, 999],
  ["q33.1", 2, 1100], ["q33.3", 2, 1299], ["q34", 2, 1449],
];

const TICKS = [[0, 731, "97,252,000 bp"], [0, 1140], [0, 1551, "97,253,000 bp"], [1, 392], [1, 802, "97,254,000 bp"], [1, 1214], [2, 55, "97,255,000 bp"], [2, 463], [2, 875, "97,256,000 bp"], [2, 1285]];

function Ideogram() {
  const c1 = px(0, 1041);
  const mid = px(0, 1087);
  const c2 = px(0, 1133);
  return (
    <g>
      <text x="179.5" y="12" fontSize="11" fontWeight="bold">chr13</text>
      <path d={box(176.5, 17.5, c1 - 176.5, 9) + box(c2, 17.5, 1900 - c2, 9)} fill="#fff" stroke="#000" />
      <path d={[601, 805].map((u) => box(rpx(0, u), 17, 1, 10)).join("")} />
      <path d={`M${c1} 17L${mid} 22L${c1} 27zM${c2} 17L${mid} 22L${c2} 27z`} fill="#b20000" />
      {BANDS.map(([t1, u1, t2, u2, fill]) => {
        const a = rpx(t1, u1);
        return <rect key={a} x={a + 0.5} y="17.5" width={rpx(t2, u2) - a - 1} height="9" fill={fill} stroke="#000" />;
      })}
      <rect x={rpx(2, 897)} y="15" width="5" height="15" fill="#ff0000" />
      <g fontFamily='"DejaVu Sans"' fontSize="10" fontWeight="bold" textAnchor="middle">
        {BAND_NAMES.map(([name, t, u]) => <text key={name} x={px(t, u)} y="37">{name}</text>)}
      </g>
    </g>
  );
}

function Ruler() {
  return (
    <g>
      <path d={box(176, 52, 1724, 1) + box(176, 52, 1, 66) + box(1899, 52, 1, 66) + box(176, 117, 1724, 1)} fill="#c6c6d0" />
      <path d={box(180, 78, 825, 1) + box(1072, 78, 824, 1) + box(176, 118, 1724, 1) + box(176, 118, 1, 11)} />
      <path d="M177 78.5l9 -3.5v7zM1899 78.5l-9 -3.5v7z" />
      <text x="1038" y="82.5" fontSize="12" fontWeight="bold" textAnchor="middle">5,153 bp</text>
      {TICKS.map(([t, u, label]) => (
        <g key={`${t}-${u}`}>
          <rect x={rpx(t, u)} y="108" width="1" height="9" />
          {label && <text x={px(t, u)} y="103" fontSize="9" fontWeight="bold" textAnchor="middle">{label}</text>}
        </g>
      ))}
    </g>
  );
}

function RangeLabel({ y, width, children }) {
  return <text x="180" y={y} fontSize="8" textLength={width} fill="#222">{children}</text>;
}

function GeneTrack() {
  const arrows = [];
  for (let x = 203; x < 1900; x += 30) arrows.push(x);
  return (
    <g>
      <path d={box(176, 904, 1724, 1)} fill="#0000b2" />
      <path d={arrows.map((x) => `M${x - 2.5} 902l2.5 2.5l-2.5 2.5`).join("")} fill="none" stroke="#0000f0" strokeWidth="1.3" shapeRendering="auto" />
      <text x="1038" y="929" fontSize="16" textAnchor="middle" fill="#1c1c1c">MBNL2</text>
      <path d={box(176, 932, 1724, 1)} fill="#c6c6d0" />
    </g>
  );
}

function TrackPanel({ y, height, gap, names, nameBox, openBox, shaded, header, flush, closed, thumb, children }) {
  const top = y + (flush ? 1 : 2);
  const inner = height - (flush ? 2 : 3) - (closed ? 1 : 0);
  return (
    <Panel $height={height} $gap={gap}>
      <Names $boxed={nameBox} $open={openBox}>{names}</Names>
      <Gutter $shade={shaded} />
      <Divider />
      <Edge $header={header} />
      <DataArea $flush={flush} $closed={closed}>
        <Chart width={WIDTH} height={inner} viewBox={`${LEFT} ${top} ${WIDTH} ${inner}`}>{children}</Chart>
      </DataArea>
      <ScrollTrack $top={thumb ? thumb[0] - y - 1 : 0}>{thumb && <Thumb $height={thumb[1]} />}</ScrollTrack>
    </Panel>
  );
}

const Baseline = ({ y }) => <rect x={LEFT} y={y} width={WIDTH} height="1" fill="#858585" />;

export default function App() {
  return (
    <>
      <GlobalStyle />
      <Page>
        <TrackPanel y={0} height={130} nameBox header closed>
          <Ideogram />
          <Ruler />
        </TrackPanel>
        <TrackPanel y={130} height={8} gap={3} nameBox openBox thumb={[132, 4]} />
        <TrackPanel y={141} height={223} gap={3} shaded thumb={[143, 149]}
          names={<><TrackName $height={41}>1-00801....Coverage</TrackName><TrackName>1-00801.PB.hg38.bam</TrackName></>}>
          <DepthSteps />
          <Baseline y={182} />
          <RangeLabel y={152} width={33}>[0 - 10.00]</RangeLabel>
          <LongReads top={186} />
        </TrackPanel>
        <TrackPanel y={367} height={84} gap={3} shaded flush thumb={[395, 18]}
          names={<TrackName>{"1-00801.hg38.dedup.cle\nan.recal.cram"}</TrackName>}>
          <ShortReads rows={CRAM_A} top={368} />
        </TrackPanel>
        <TrackPanel y={454} height={261} gap={3} shaded thumb={[456, 102]}
          names={<><TrackName $height={41}>1-00801-...Coverage</TrackName><TrackName>{"1-00801-01.hg38.dedup.\nclean.recal.cram"}</TrackName></>}>
          <Coverage profile={COVERAGE_01} base={494} origin={450} seed={7} />
          <Baseline y={495} />
          <RangeLabel y={465} width={23}>[0 - 57]</RangeLabel>
          <ShortReads rows={CRAM_01} top={499} />
          <path d={box(922, 499 + 9, 2, 7) + box(921, 508, 4, 2) + box(921, 513, 4, 2)} fill="#7516dc" />
        </TrackPanel>
        <TrackPanel y={718} height={170} gap={3} shaded thumb={[720, 39]}
          names={<><TrackName $height={41}>1-00801-...Coverage</TrackName><TrackName>{"1-00801-02.hg38.dedup.\nclean.recal.cram"}</TrackName></>}>
          <Coverage profile={COVERAGE_02} base={758} origin={710} seed={13} />
          <Baseline y={759} />
          <RangeLabel y={729} width={23}>[0 - 55]</RangeLabel>
          <ShortReads rows={CRAM_02} top={763} />
        </TrackPanel>
        <TrackPanel y={891} height={85} closed names={<TrackName $height={41}>Gene</TrackName>}>
          <GeneTrack />
        </TrackPanel>
      </Page>
    </>
  );
}
